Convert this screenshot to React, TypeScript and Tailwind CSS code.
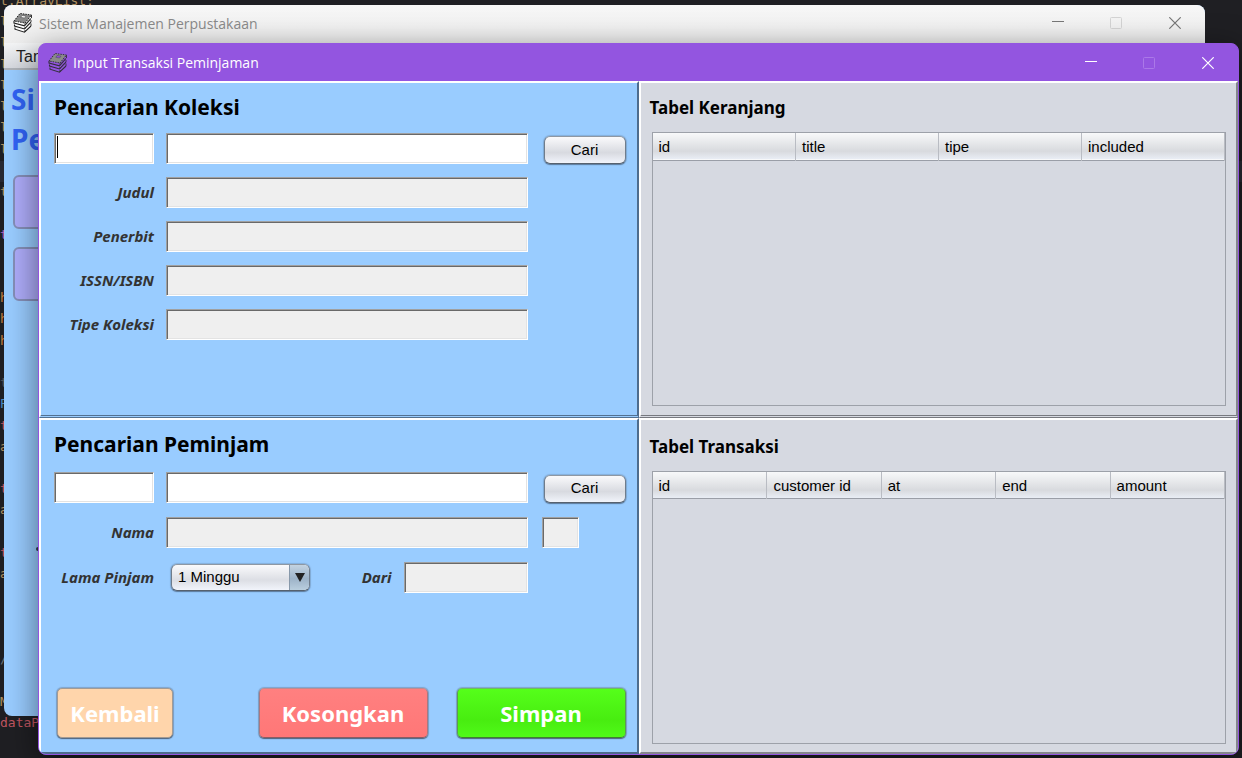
import type { ReactNode } from "react";

const bevel =
  "h-[31px] min-w-0 border border-t-[#a0a0a0] border-l-[#a0a0a0] border-r-white border-b-white px-1 text-[15px] text-black outline-none shadow-[inset_1px_1px_0_#696969,inset_-1px_-1px_0_#e3e3e3]";
const labelStyle =
  "text-right font-['Noto_Sans','Open_Sans',sans-serif] text-[15px] font-bold italic whitespace-nowrap text-[#333333]";
const headingFont = "font-['Noto_Sans','Open_Sans',sans-serif] font-bold text-black";

const codeRows: Record<number, [string, string]> = {
  0: ["t.ArrayList;", "text-[#b09060]"],
  1: ["l", "text-[#b09060]"],
  2: ["l", "text-[#b09060]"],
  3: ["l", "text-[#b09060]"],
  4: ["l", "text-[#b09060]"],
  5: ["l", "text-[#b09060]"],
  6: ["l", "text-[#b09060]"],
  7: ["l", "text-[#b09060]"],
  9: ["t", "text-[#b09060]"],
  11: ["t", "text-[#b05fc0]"],
  14: ["h", "text-[#c08040]"],
  15: ["h", "text-[#c08040]"],
  16: ["h", "text-[#c08040]"],
  18: ["t", "text-[#55585c]"],
  19: ["P", "text-[#4a88c0]"],
  20: ["t", "text-[#c05560]"],
  21: ["a", "text-[#b09060]"],
  23: ["t", "text-[#c05560]"],
  24: ["a", "text-[#b09060]"],
  26: ["t", "text-[#c05560]"],
  27: ["a", "text-[#b09060]"],
  31: ["/", "text-[#6a7078]"],
  33: ["M", "text-[#b09060]"],
  34: ["dataP", "text-[#c05560]"],
};

function CodeBackdrop() {
  return (
    <div className="absolute inset-x-0 -top-[9px] grid h-[743px] auto-rows-fr font-['DejaVu_Sans_Mono',monospace] text-[13px]">
      {Array.from({ length: 35 }, (_, i) => (
        <div key={i} className={i === 8 ? "min-h-0 bg-[#292a33]" : "min-h-0"}>
          {codeRows[i] && <span className={codeRows[i][1]}>{codeRows[i][0]}</span>}
        </div>
      ))}
    </div>
  );
}

function BooksIcon({ paper, cover, ink }: { paper: string; cover: string; ink: string }) {
  return (
    <svg viewBox="0 0 20 20" className="size-5 shrink-0" aria-hidden="true">
      <path d="M1 8 7 0.500 18.500 2V14L12 19.500 2 17Z" fill={paper} />
      <path d="M1 8 7 0.500 18.500 2 12 10Z" fill={cover} stroke={ink} strokeWidth="1" strokeDasharray="1.500 1" />
      <path d="M9 2.500 13 3.200 11.500 5 7.800 4.300Z" fill={paper} stroke={ink} strokeWidth="0.400" />
      <path
        d="M1 8V10L11.500 12.800 18 5.500M1.500 11.500V13L11.500 16 18 9.200M2 14.500V16.200L11.500 19.200 18 13"
        fill="none"
        stroke={ink}
        strokeWidth="1.100"
      />
      <path d="M12 10V12M12 14V15.500M12 17V19M18.500 2V5M18 7V9M18 10.500V13" fill="none" stroke={ink} strokeWidth="0.900" />
      <path d="M13.500 10 17.500 5M13.500 13.500 17.500 9" stroke={ink} strokeWidth="0.700" strokeDasharray="1 1" />
    </svg>
  );
}

function WindowControls({ line, faint }: { line: string; faint: string }) {
  return (
    <div className="ml-auto flex items-center">
      <button type="button" aria-label="Minimize" className="flex w-[58px] justify-center">
        <svg viewBox="0 0 12 12" className="size-3">
          <path d="M0 4.500H12" stroke={line} />
        </svg>
      </button>
      <button type="button" aria-label="Maximize" className="flex w-[58px] justify-center">
        <svg viewBox="0 0 12 12" className="size-3">
          <rect x="0.500" y="0.500" width="11" height="11" rx="1" fill="none" stroke={faint} />
        </svg>
      </button>
      <button type="button" aria-label="Close" className="flex w-[60px] justify-center">
        <svg viewBox="0 0 12 12" className="size-3">
          <path d="M0.300 0.300 11.700 11.700M11.700 0.300 0.300 11.700" stroke={line} strokeWidth="1.200" />
        </svg>
      </button>
    </div>
  );
}

const metalEdge =
  "rounded-[6px] border border-t-[#8f98a3] border-r-[#6f7c8b] border-b-[#56616e] border-l-[#6f7c8b] shadow-[0_1px_1px_rgba(60,80,105,0.55),0_0_1px_1px_rgba(90,110,135,0.3)]";

function SearchButton() {
  return (
    <button
      type="submit"
      className={`mt-[3px] mr-px h-[28px] w-[82px] self-start justify-self-end bg-linear-to-b from-[#fafafc] via-[#d8dae0] via-60% to-[#f1f4fb] text-[15px] text-black ${metalEdge}`}
    >
      Cari
    </button>
  );
}

function ActionButton({ className, children }: { className: string; children: ReactNode }) {
  return (
    <button
      type="button"
      className={`h-[50px] rounded-[5px] border font-['Noto_Sans','Open_Sans',sans-serif] text-[22px] font-bold text-white shadow-[0_1px_1px_rgba(50,60,75,0.6),0_0_1px_1px_rgba(90,105,125,0.4)] ${className}`}
    >
      {children}
    </button>
  );
}

function ReadonlyRow({ id, label, children }: { id: string; label: string; children?: ReactNode }) {
  return (
    <>
      <label htmlFor={id} className={labelStyle}>
        {label}
      </label>
      <input id={id} readOnly className={`${bevel} bg-[#efefef]`} />
      <div className="pl-0.5">{children}</div>
    </>
  );
}

function DataTable({ title, columns }: { title: string; columns: string[] }) {
  return (
    <>
      <h2 className={`${headingFont} text-[17px] leading-[26px]`}>{title}</h2>
      <div className="mt-[11px] ml-0.5 flex-1 border border-[#9da1a9]">
        <table aria-label={title} className="w-full table-fixed border-collapse">
          <thead>
            <tr className="h-[27px] border-b border-[#9a9ea7] bg-linear-to-b from-[#f8f9fa] via-[#d8dade] via-70% to-[#e9edf5]">
              {columns.map((c) => (
                <th key={c} className="border-r border-[#b9bcc3] px-1.5 pt-0.5 text-left text-[15px] font-normal text-black">
                  {c}
                </th>
              ))}
            </tr>
          </thead>
        </table>
      </div>
    </>
  );
}

const bluePanel =
  "flex flex-col bg-[#99ccff] border-t-2 border-l-2 border-t-white border-l-white border-r-2 border-r-[#4e6c8d] pl-[13px] pr-[10px]";
const greyPanel =
  "flex flex-col bg-[#d6d9e1] border-t-2 border-l-2 border-t-white border-l-white border-r-2 border-r-[#85878d] pl-[9px] pr-[10px]";
const formGrid = "grid grid-cols-[100px_1fr_87px] items-center gap-x-3";

function BackWindow() {
  return (
    <div className="absolute top-[5px] right-[37px] bottom-[42px] left-1 flex flex-col overflow-hidden rounded-lg bg-[#99ccff]">
      <header className="flex h-[38px] shrink-0 items-center bg-linear-to-b from-[#f7f7f7] to-[#eeeeee] pb-0.5 pl-[9px] text-[#8a8a8a]">
        <BooksIcon paper="#ffffff" cover="#8a8a8a" ink="#222222" />
        <span className="ml-1.5 font-['Open_Sans',sans-serif] text-[14px]">Sistem Manajemen Perpustakaan</span>
        <WindowControls line="#777777" faint="#d4d4d4" />
      </header>
      <nav className="h-[27px] shrink-0 border-b-2 border-[#aeb3b9] bg-linear-to-b from-[#f4f5f6] to-[#d6d9df] pl-3 text-[16px] leading-[27px] text-[#222222]">
        Tam
      </nav>
      <main className="flex w-[60px] grow flex-col pl-[9px]">
        <h1 className="-ml-0.5 pt-[9px] font-['Noto_Sans','Open_Sans',sans-serif] text-[28px] leading-10 font-bold text-[#3163f5]">
          Si
          <br />
          Pe
        </h1>
        <button type="button" aria-label="Menu" className="mt-4 h-[54px] rounded-md border-2 border-[#858fb8] bg-[#aeacfa]" />
        <button type="button" aria-label="Menu" className="mt-[18px] h-[54px] rounded-md border-2 border-[#858fb8] bg-[#aeacfa]" />
        <span className="mt-[246px] ml-[23px] h-1 w-2 rounded-sm bg-[#333c48]" />
      </main>
    </div>
  );
}

export default function App() {
  return (
    <div className="relative h-screen min-h-[700px] overflow-hidden bg-[#1f1f23] font-['Liberation_Sans',Arial,sans-serif]">
      <CodeBackdrop />
      <BackWindow />
      <div className="absolute top-[43px] right-[3px] bottom-[3px] left-[38px] flex flex-col overflow-hidden rounded-lg border border-[#9355e0] bg-[#9355e0] shadow-[0_8px_32px_rgba(0,0,0,0.5)]">
        <header className="flex h-[37px] shrink-0 items-center pl-[9px] text-white">
          <BooksIcon paper="#9355e0" cover="#8a8a8a" ink="#33303c" />
          <span className="ml-[5px] font-['Open_Sans',sans-serif] text-[14px]">Input Transaksi Peminjaman</span>
          <WindowControls line="#ffffff" faint="#ab78e8" />
        </header>
        <div className="grid min-h-0 flex-1 grid-cols-2 grid-rows-2">
          <form className={`${bluePanel} border-b-[3px] border-b-[#527191] [border-bottom-style:double] pt-[11px]`}>
            <h2 className={`${headingFont} text-[21px] leading-[26px]`}>Pencarian Koleksi</h2>
            <div className={`${formGrid} mt-[13px] gap-y-[13px]`}>
              <div className="relative flex">
                <input aria-label="ID koleksi" className={`${bevel} w-full bg-white`} />
                <span className="absolute top-[3px] left-[3px] h-[22px] w-px bg-black" />
              </div>
              <input aria-label="Kata kunci koleksi" className={`${bevel} bg-white`} />
              <SearchButton />
              <ReadonlyRow id="judul" label="Judul" />
              <ReadonlyRow id="penerbit" label="Penerbit" />
              <ReadonlyRow id="issn" label="ISSN/ISBN" />
              <ReadonlyRow id="tipe" label="Tipe Koleksi" />
            </div>
          </form>
          <section className={`${greyPanel} border-b-[3px] border-b-[#77797f] [border-bottom-style:double] pt-3 pb-[9px]`}>
            <DataTable title="Tabel Keranjang" columns={["id", "title", "tipe", "included"]} />
          </section>
          <form className={`${bluePanel} border-b-2 border-b-[#4e6c8d] pt-[11px] pb-[14px]`}>
            <h2 className={`${headingFont} text-[21px] leading-[26px]`}>Pencarian Peminjam</h2>
            <div className={`${formGrid} mt-[15px] gap-y-[14px]`}>
              <input aria-label="ID peminjam" className={`${bevel} bg-white`} />
              <input aria-label="Kata kunci peminjam" className={`${bevel} bg-white`} />
              <SearchButton />
              <ReadonlyRow id="nama" label="Nama">
                <input aria-label="Status" readOnly className={`${bevel} w-[37px] bg-[#efefef] align-top`} />
              </ReadonlyRow>
              <label htmlFor="lama" className={labelStyle}>
                Lama Pinjam
              </label>
              <div className="flex items-center justify-between pl-[5px]">
                <div className="relative">
                  <select
                    id="lama"
                    className={`block h-[27px] w-[139px] appearance-none bg-linear-to-b from-[#fafafc] via-[#dcdee4] via-60% to-[#f1f4fb] pl-1.5 text-[15px] text-black ${metalEdge}`}
                  >
                    <option>1 Minggu</option>
                  </select>
                  <span className="pointer-events-none absolute inset-y-px right-px flex w-5 items-center justify-center rounded-r-[5px] border-l border-[#8798aa] bg-linear-to-b from-[#c3d3e2] via-[#9db3c8] via-55% to-[#b9cede]">
                    <svg viewBox="0 0 10 9" className="h-[9px] w-[10px]">
                      <path d="M0 0H10L5 9Z" fill="#222222" />
                    </svg>
                  </span>
                </div>
                <div className="flex items-center gap-3">
                  <label htmlFor="dari" className={labelStyle}>
                    Dari
                  </label>
                  <input id="dari" readOnly className={`${bevel} w-[124px] bg-[#efefef]`} />
                </div>
              </div>
            </div>
            <div className="mt-auto flex pl-[3px]">
              <ActionButton className="mr-auto w-[116px] border-[#a39b94] bg-[#ffd5ab]">Kembali</ActionButton>
              <ActionButton className="w-[169px] border-t-[#c08a90] border-r-[#a87880] border-b-[#8a5c64] border-l-[#a87880] bg-linear-to-b from-[#ff8080] to-[#ff7777]">
                Kosongkan
              </ActionButton>
              <ActionButton className="mr-px ml-[29px] w-[169px] border-t-[#6fba60] border-r-[#5a9c50] border-b-[#3f8030] border-l-[#5a9c50] bg-linear-to-b from-[#55ff1a] via-[#48ed10] via-65% to-[#50fa18]">
                Simpan
              </ActionButton>
            </div>
          </form>
          <section className={`${greyPanel} border-b-2 border-b-[#85878d] pt-[14px] pb-[8px]`}>
            <DataTable title="Tabel Transaksi" columns={["id", "customer id", "at", "end", "amount"]} />
          </section>
        </div>
      </div>
    </div>
  );
}
